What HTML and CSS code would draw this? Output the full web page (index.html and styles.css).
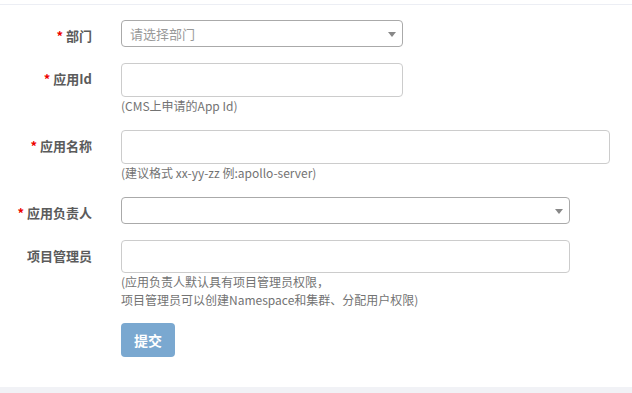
FILE: index.html
```html
<!DOCTYPE html>
<html lang="zh-CN">
<head>
  <meta charset="UTF-8">
  <title>创建项目</title>
  <link rel="stylesheet" href="styles.css">
</head>
<body>

<div class="panel">
  <form class="app-form">
    <div class="form-row">
      <label class="control-label"><span class="req">*</span> 部门</label>
      <div class="controls">
        <div class="select select-sm">
          <span class="placeholder">请选择部门</span>
          <span class="arrow"></span>
        </div>
      </div>
    </div>

    <div class="form-row has-help">
      <label class="control-label"><span class="req">*</span> 应用Id</label>
      <div class="controls">
        <input type="text" class="input input-sm">
        <p class="help">(CMS上申请的App Id)</p>
      </div>
    </div>

    <div class="form-row has-help">
      <label class="control-label"><span class="req">*</span> 应用名称</label>
      <div class="controls">
        <input type="text" class="input input-lg">
        <p class="help">(建议格式 xx-yy-zz 例:apollo-server)</p>
      </div>
    </div>

    <div class="form-row">
      <label class="control-label"><span class="req">*</span> 应用负责人</label>
      <div class="controls">
        <div class="select select-md">
          <span class="placeholder"></span>
          <span class="arrow"></span>
        </div>
      </div>
    </div>

    <div class="form-row has-help last-field">
      <label class="control-label">项目管理员</label>
      <div class="controls">
        <input type="text" class="input input-md input-short">
        <p class="help">(应用负责人默认具有项目管理员权限，<br>项目管理员可以创建Namespace和集群、分配用户权限)</p>
      </div>
    </div>

    <div class="form-row">
      <div></div>
      <div class="controls">
        <button type="submit" class="btn" disabled>提交</button>
      </div>
    </div>
  </form>
</div>

</body>
</html>
```

FILE: styles.css
```css
* {
  box-sizing: border-box;
}

body {
  margin: 0;
  background: #f1f2f6;
  font-family: "Noto Sans CJK SC", "Noto Sans", sans-serif;
  font-size: 13px;
  color: #555;
}

.panel {
  background: #fff;
  padding-top: 4px;
  height: 387px;
  box-shadow: 0 1px 2px rgba(0,0,0,0.06);
}

.app-form {
  border-top: 1px solid #eceef4;
  padding-top: 15px;
}

.form-row {
  display: grid;
  grid-template-columns: 92px 1fr;
  column-gap: 29px;
  margin-bottom: 16px;
}

.form-row.has-help {
  margin-bottom: 15px;
}

.form-row.last-field {
  margin-bottom: 14px;
}

.control-label {
  text-align: right;
  font-weight: bold;
  padding-top: 7px;
  line-height: 18px;
  color: #5b5b5b;
}

.req {
  color: #e00;
}

.controls {
  display: flex;
  flex-direction: column;
  align-items: flex-start;
}

.input {
  height: 34px;
  border: 1px solid #ccc;
  border-radius: 4px;
  background: #fff;
  font: inherit;
  padding: 0 8px;
}

.input-sm { width: 282px; }
.input-lg { width: 489px; }
.input-md { width: 449px; }
.input-short { height: 33px; }

.select {
  position: relative;
  height: 27px;
  border: 1px solid #aaa;
  border-radius: 4px;
  background: #fff;
  display: flex;
  align-items: center;
  padding-left: 8px;
}

.select-sm { width: 282px; }
.select-md { width: 449px; }

.placeholder {
  color: #999;
  font-size: 13px;
}

.arrow {
  position: absolute;
  right: 6px;
  top: 11px;
  border-left: 4px solid transparent;
  border-right: 4px solid transparent;
  border-top: 5px solid #888;
}

.help {
  margin: 0;
  font-size: 12px;
  line-height: 18px;
  color: #737373;
}

.btn {
  width: 54px;
  height: 34px;
  border: none;
  border-radius: 4px;
  background: #7aa8d0;
  color: #fff;
  font: inherit;
  font-size: 14px;
  font-weight: bold;
}
```
